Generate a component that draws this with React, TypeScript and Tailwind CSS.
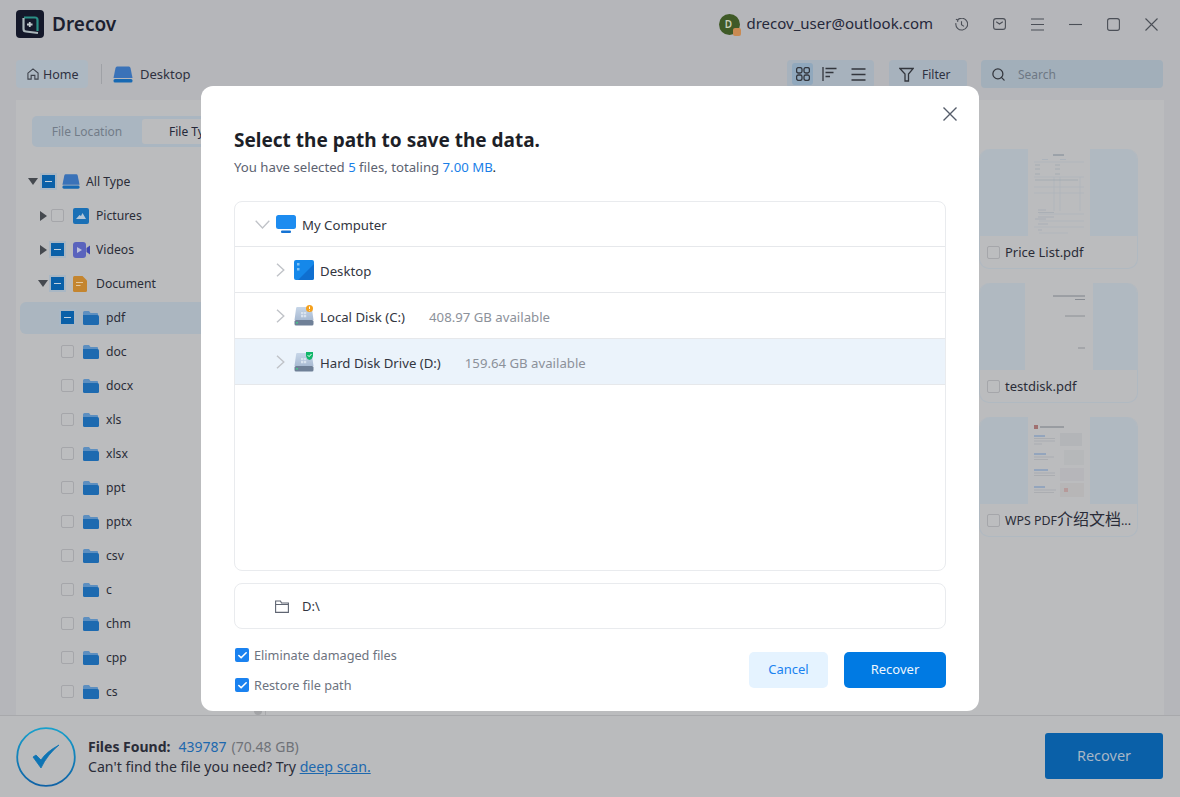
import React from "react";
import { Check, Search } from "lucide-react";

const FONT = "font-['Noto_Sans','Noto_Sans_CJK_SC',sans-serif]";

function Logo() {
  return (
    <svg width="28" height="28" viewBox="0 0 28 28">
      <rect width="28" height="28" rx="4" fill="#14182a" />
      <path d="M8 7.5 H19 Q21.5 7.5 21.5 10 V21" fill="none" stroke="#2a8f86" strokeWidth="2.2" />
      <path d="M7.5 8 V19 Q7.5 21.5 10 21.5 L22 23" fill="none" stroke="#aab6ba" strokeWidth="2.2" />
      <path d="M11 14.5 H16.5 M13.75 12 V17" stroke="#c4cbce" strokeWidth="1.8" />
    </svg>
  );
}

function DriveIcon({ w = 20 }: { w?: number }) {
  return (
    <svg width={w} height="17" viewBox="0 0 20 17">
      <path d="M4 0.5 H16 Q17 0.5 17.5 2 L19.5 12 H0.5 L2.5 2 Q3 0.5 4 0.5 Z" fill="#3a72b8" />
      <rect x="0.5" y="13" width="19" height="3.5" rx="1.5" fill="#1769b3" />
    </svg>
  );
}

function Tri({ open }: { open: boolean }) {
  return open ? (
    <svg width="10" height="7" viewBox="0 0 10 7"><path d="M0 0 H10 L5 7 Z" fill="#45494f" /></svg>
  ) : (
    <svg width="7" height="10" viewBox="0 0 7 10"><path d="M0 0 L7 5 L0 10 Z" fill="#45494f" /></svg>
  );
}

function TreeCheck({ on }: { on: boolean }) {
  return on ? (
    <span className="w-[13px] h-[13px] bg-[#0a60a8] flex items-center justify-center outline outline-2 outline-[#a9b7c4] shrink-0">
      <span className="w-[7px] h-[1px] bg-[#c4d2de]" />
    </span>
  ) : (
    <span className="w-[13px] h-[13px] rounded-[2px] border border-[#a5a6aa] bg-[#bcbdbf] shrink-0" />
  );
}

function FolderIcon() {
  return (
    <svg width="16" height="14" viewBox="0 0 16 14">
      <path d="M0 1.5 Q0 0 1.5 0 H6 L7.5 2 H14 Q15 2 15 3 V4 H0 Z" fill="#5d8fc0" />
      <path d="M0 4 H14.5 Q16 4 16 5.5 V12.5 Q16 14 14.5 14 H1.5 Q0 14 0 12.5 Z" fill="#1d6ab0" />
    </svg>
  );
}

function PicturesIcon() {
  return (
    <svg width="16" height="16" viewBox="0 0 16 16">
      <rect width="16" height="16" rx="2" fill="#1a70b6" />
      <path d="M3 11 L6.5 7 L8 8 L9.5 5 L13 11 Z" fill="#b3c6d8" />
    </svg>
  );
}

function VideoIcon() {
  return (
    <svg width="17" height="16" viewBox="0 0 17 16">
      <rect width="13" height="16" rx="3" fill="#5a63bd" />
      <path d="M4 5 L9 8 L4 11 Z" fill="#bcc0dc" />
      <path d="M13.5 6 L17 3.5 V12.5 L13.5 10 Z" fill="#3f48ae" />
    </svg>
  );
}

function DocIcon() {
  return (
    <svg width="14" height="16" viewBox="0 0 14 16">
      <path d="M1.5 0 H9.5 L14 4.5 V14.5 Q14 16 12.5 16 H1.5 Q0 16 0 14.5 V1.5 Q0 0 1.5 0 Z" fill="#c4852f" />
      <path d="M3 6.5 H10 M3 9.5 H7.5" stroke="#e3c9a2" strokeWidth="1.2" />
    </svg>
  );
}

type RowDef = { label: string; level: 0 | 1 | 2; on: boolean; tri?: "open" | "closed"; icon: React.ReactNode; sel?: boolean };

const rows: RowDef[] = [
  { label: "All Type", level: 0, on: true, tri: "open", icon: <DriveIcon w={18} /> },
  { label: "Pictures", level: 1, on: false, tri: "closed", icon: <PicturesIcon /> },
  { label: "Videos", level: 1, on: true, tri: "closed", icon: <VideoIcon /> },
  { label: "Document", level: 1, on: true, tri: "open", icon: <DocIcon /> },
  { label: "pdf", level: 2, on: true, icon: <FolderIcon />, sel: true },
  ...["doc", "docx", "xls", "xlsx", "ppt", "pptx", "csv", "c", "chm", "cpp", "cs"].map(
    (label): RowDef => ({ label, level: 2, on: false, icon: <FolderIcon /> })
  ),
];

function TreeRow({ r }: { r: RowDef }) {
  const pad = r.level === 0 ? "pl-[12px]" : r.level === 1 ? "pl-[24px]" : "pl-[45px]";
  const triW = r.level === 0 ? "w-[14px]" : r.level === 1 ? "w-[11px]" : "w-0";
  const iconW = r.level === 0 ? "w-[24px] ml-[7px]" : "w-[23px] ml-[9px]";
  return (
    <div className={`h-[34px] flex items-center ${pad} relative shrink-0`}>
      {r.sel && <div className="absolute left-[4px] right-0 top-[1px] bottom-[1px] bg-[#abb6c0] rounded-l-[6px]" />}
      <div className="relative flex items-center">
        <span className={`${triW} flex items-center justify-start shrink-0 ${r.level === 1 && r.tri === "open" ? "-translate-x-[2px]" : ""}`}>
          {r.tri && <Tri open={r.tri === "open"} />}
        </span>
        <TreeCheck on={r.on} />
        <span className={`${iconW} flex items-center shrink-0`}>{r.icon}</span>
        <span className="text-[12.2px] text-[#2a2c38]">{r.label}</span>
      </div>
    </div>
  );
}

function DocThumb({ kind }: { kind: "price" | "test" | "wps" }) {
  return (
    <div className="h-[88px] rounded-t-[10px] bg-[#b0b9c1] flex justify-center overflow-hidden">
      <div className={`${kind === "test" ? "w-[68px]" : "w-[62px]"} h-full bg-[#bbbcbe]`}>
        {kind === "price" && (
          <svg width="62" height="88" viewBox="0 0 62 88">
            <path d="M25 6 H36" stroke="#7c8894" strokeWidth="1" />
            <path d="M14 10.5 H20 M32 10.5 H38" stroke="#a3adb8" strokeWidth="0.6" />
            <path d="M6 13 H56 M6 28 H56 M6 38 H56 M6 44 H56 M11 65 H56 M11 72 H56 M6 78 H56 M11 84 H40" stroke="#aab1b8" strokeWidth="0.5" />
            <path d="M26 28 V62 M32 28 V62 M52 28 V62" stroke="#aab1b8" strokeWidth="0.5" />
            <path d="M7 16 H12 M27 16 H32 M7 20 H12 M27 20 H32 M7 25 H12 M27 25 H32 M7 31 H50" stroke="#99a3ad" strokeWidth="0.6" />
            <path d="M10 61 H18 M10 63.5 H26 M10 68 H26 M7 70 H18 M10 75 H20 M10 81 H14" stroke="#99a3ad" strokeWidth="0.5" />
          </svg>
        )}
        {kind === "test" && (
          <svg width="68" height="88" viewBox="0 0 68 88">
            <path d="M28 13 H60" stroke="#777c84" strokeWidth="0.9" />
            <path d="M50 16.5 H60" stroke="#7b8088" strokeWidth="0.8" />
            <path d="M40 33 H60" stroke="#80858c" strokeWidth="0.8" />
            <path d="M53 65 H60" stroke="#7b8088" strokeWidth="0.7" />
          </svg>
        )}
        {kind === "wps" && (
          <svg width="62" height="88" viewBox="0 0 62 88">
            <rect x="6" y="8" width="4" height="4" fill="#a07070" />
            <path d="M12 10 H36" stroke="#777c84" strokeWidth="1" />
            <path d="M6 19 H17 M6 37 H18 M6 53 H20 M6 70 H17" stroke="#6d8ebc" strokeWidth="1" />
            <path d="M6 21.5 H27 M6 24 H27 M6 27 H14 M6 40 H26 M6 42.5 H20 M6 56 H27 M6 58.5 H27 M6 73 H28 M6 75.5 H26" stroke="#9a9ea4" strokeWidth="0.5" />
            <rect x="32" y="16" width="22" height="13" fill="#b3b5b8" />
            <rect x="36" y="33" width="20" height="15" fill="#b6b8ba" />
            <rect x="32" y="51" width="24" height="13" fill="#b6b6ba" />
            <rect x="32" y="66" width="24" height="14" fill="#b7b6b7" />
            <rect x="36" y="71" width="4" height="4" fill="#b69a9a" />
          </svg>
        )}
      </div>
    </div>
  );
}

function FileCard({ kind, children }: { kind: "price" | "test" | "wps"; children: React.ReactNode }) {
  return (
    <div className="w-[159px] h-[120px] rounded-[10px] border border-[#b0b9c1] border-t-0 flex flex-col shrink-0">
      <DocThumb kind={kind} />
      <div className="flex items-center pl-[7px] h-[32px] gap-[5px] pt-[1px]">
        <span className="w-[13px] h-[13px] rounded-[2px] border border-[#a5a6aa] bg-[#bcbdbf] shrink-0" />
        <span className={`${kind === "wps" ? "text-[12.4px]" : "text-[13px]"} text-[#2a2c38] whitespace-nowrap`}>{children}</span>
      </div>
    </div>
  );
}

function HardDisk({ badge }: { badge: "warn" | "ok" }) {
  return (
    <svg width="20" height="21" viewBox="0 0 20 21">
      <defs>
        <linearGradient id={`hd-${badge}`} x1="0" y1="0" x2="0" y2="1">
          <stop offset="0" stopColor="#c7d6e8" />
          <stop offset="1" stopColor="#a8bad2" />
        </linearGradient>
      </defs>
      <path d="M3 2 H16 Q18 2 18 4 L19.5 15 H0.5 L2 4 Q2 2 3 2 Z" fill={`url(#hd-${badge})`} />
      <path d="M7 7 H9.3 V9.3 H7 Z M9.9 7 H12.2 V9.3 H9.9 Z M7 9.9 H9.3 V12.2 H7 Z M9.9 9.9 H12.2 V12.2 H9.9 Z" fill="#d9e3ef" />
      <rect x="0.5" y="15" width="19" height="5.5" rx="1.5" fill="#6f8097" />
      <rect x="2" y="17" width="2" height="1.5" fill="#47c48a" />
      {badge === "warn" ? (
        <>
          <circle cx="15.5" cy="3.5" r="3.5" fill="#f5a11d" />
          <path d="M15.5 1.5 V4 M15.5 5 V5.6" stroke="#fff" strokeWidth="1" />
        </>
      ) : (
        <>
          <path d="M12 1 H19 V5 Q18.5 8 15.5 9 Q12.5 8 12 5 Z" fill="#12b76a" />
          <path d="M13.7 4.2 L15.1 5.6 L17.5 3" fill="none" stroke="#fff" strokeWidth="1" />
        </>
      )}
    </svg>
  );
}

function RowChevron() {
  return (
    <svg width="9" height="14" viewBox="0 0 9 14" fill="none" stroke="#c0c3c8" strokeWidth="1.4" className="mr-[9px] shrink-0">
      <path d="M1 0.7 L7.8 7 L1 13.3" />
    </svg>
  );
}

function DialogRow({ icon, label, extra, sel }: { icon: React.ReactNode; label: string; extra?: string; sel?: boolean }) {
  return (
    <div className={`h-[46px] flex items-center pl-[41px] border-b border-[#e6e8eb] ${sel ? "bg-[#ebf3fb]" : ""}`}>
      <RowChevron />
      <span className="w-[26px] flex items-center">{icon}</span>
      <span className="text-[13.2px] text-[#33363f] pt-[4px]">{label}</span>
      {extra && <span className="text-[13.2px] text-[#8c919a] ml-[24px] pt-[4px]">{extra}</span>}
    </div>
  );
}

function BlueCheck({ label }: { label: string }) {
  return (
    <div className="flex items-center gap-[5px] pl-[1px]">
      <span className="w-[14px] h-[14px] rounded-[2px] bg-[#1a82f0] flex items-center justify-center">
        <Check size={11} strokeWidth={3.5} className="text-white" />
      </span>
      <span className="text-[12.7px] leading-[20px] text-[#6d7380]">{label}</span>
    </div>
  );
}

const ICON = "#4b4f57";

export default function App() {
  return (
    <div className={`${FONT} relative w-[1180px] h-[797px] overflow-hidden bg-[#b5b6ba] flex flex-col`}>
      {/* title bar */}
      <header className="h-[48px] shrink-0 flex items-center pl-[16px] pr-[22px]">
        <Logo />
        <span className="ml-[8px] text-[19px] font-semibold text-[#1c1f30]">Drecov</span>
        <div className="ml-auto flex items-center">
          <span className="relative w-[21px] h-[21px] rounded-full bg-[#3f5a27] flex items-center justify-center text-[10px] font-semibold text-[#c9d0bb] pr-[3px]">
            D
            <span className="absolute right-[-1px] bottom-[-1px] w-[8px] h-[8px] rounded-[2px] bg-[#c98a52]" />
          </span>
          <span className="ml-[6px] text-[15px] text-[#25283a] -mt-[2px]">drecov_user@outlook.com</span>
          <svg className="ml-[22px]" width="13" height="13" viewBox="0 0 13 13" fill="none" stroke={ICON} strokeWidth="1.1">
            <path d="M2.6 1.9 A5.9 5.9 0 1 1 0.9 5.2" />
            <path d="M0.9 1.2 L2.8 2 L2.6 3.9" />
            <path d="M6.5 3.2 V6.8 L9 8.4" />
          </svg>
          <svg className="ml-[25px]" width="13" height="12" viewBox="0 0 13 12" fill="none" stroke={ICON} strokeWidth="1.1">
            <rect x="0.6" y="0.6" width="11.8" height="10.8" rx="2.5" />
            <path d="M3.2 3.8 L6.5 6 L9.8 3.8" />
          </svg>
          <svg className="ml-[25px]" width="13" height="13" viewBox="0 0 13 13" fill="none" stroke={ICON} strokeWidth="1.1">
            <path d="M0 1 H13 M0 6.5 H13 M0 12 H13" />
          </svg>
          <svg className="ml-[25px]" width="13" height="13" viewBox="0 0 13 13" fill="none" stroke={ICON} strokeWidth="1.1">
            <path d="M0 6.5 H13" />
          </svg>
          <svg className="ml-[25px]" width="13" height="13" viewBox="0 0 13 13" fill="none" stroke={ICON} strokeWidth="1.1">
            <rect x="0.6" y="0.6" width="11.8" height="11.8" rx="2.2" />
          </svg>
          <svg className="ml-[25px]" width="13" height="13" viewBox="0 0 13 13" fill="none" stroke={ICON} strokeWidth="1.1">
            <path d="M0.5 0.5 L12.5 12.5 M12.5 0.5 L0.5 12.5" />
          </svg>
        </div>
      </header>

      {/* toolbar */}
      <div className="h-[28px] mt-[12px] shrink-0 flex items-center pl-[16px] pr-[17px]">
        <button className="w-[72px] h-[28px] rounded-[4px] bg-[#adb8c2] flex items-center pl-[11px] gap-[4px] text-[12.5px] text-[#2e3140]">
          <svg width="12" height="12" viewBox="0 0 13 13" fill="none" stroke="#3f434c" strokeWidth="1.2">
            <path d="M1 5.5 L6.5 1 L12 5.5 V12 H8.5 V8 H4.5 V12 H1 Z" />
          </svg>
          <span className="pt-[2px]">Home</span>
        </button>
        <span className="ml-[13px] w-px h-[20px] bg-[#9fa1a6]" />
        <span className="ml-[11px]"><DriveIcon /></span>
        <span className="ml-[7px] text-[13px] text-[#2e3140] pt-[2px]">Desktop</span>
        <div className="ml-auto flex items-center">
          <div className="w-[87px] h-[28px] rounded-[4px] bg-[#a7b2bd] flex items-center pl-[5px]">
            <span className="w-[21px] h-[22px] rounded-[3px] bg-[#90a8bd] flex items-center justify-center">
              <svg width="14" height="14" viewBox="0 0 14 14" fill="none" stroke="#33363d" strokeWidth="1.3">
                <rect x="0.6" y="0.6" width="5.4" height="5.4" rx="1.8" />
                <rect x="8" y="0.6" width="5.4" height="5.4" rx="1.8" />
                <rect x="0.6" y="8" width="5.4" height="5.4" rx="1.8" />
                <rect x="8" y="8" width="5.4" height="5.4" rx="1.8" />
              </svg>
            </span>
            <svg className="ml-[9px]" width="15" height="14" viewBox="0 0 15 14" fill="none" stroke="#33363d" strokeWidth="1.3">
              <path d="M1 0 V14 M3.5 1.5 H14.5 M3.5 5.5 H11.5 M3.5 9.5 H8" />
            </svg>
            <svg className="ml-[14px]" width="15" height="13" viewBox="0 0 15 13" fill="none" stroke="#33363d" strokeWidth="1.3">
              <path d="M0.5 1 H14.5 M0.5 6.5 H14.5 M0.5 12 H14.5" />
            </svg>
          </div>
          <div className="ml-[15px] w-[78px] h-[28px] rounded-[4px] bg-[#a7b2bd] flex items-center pl-[10px] gap-[8px] text-[12px] text-[#2e3140] pt-[1px]">
            <svg width="15" height="15" viewBox="0 0 15 15" fill="none" stroke="#33363d" strokeWidth="1.3">
              <path d="M0.8 1.5 H14.2 L9.5 7 V14 H6 V7 Z" />
            </svg>
            Filter
          </div>
          <div className="ml-[14px] w-[182px] h-[28px] rounded-[4px] bg-[#a2afba] flex items-center pl-[10px] gap-[12px] text-[12px] text-[#6e7884] pt-[1px]">
            <Search size={15} strokeWidth={2} className="text-[#33363d]" />
            Search
          </div>
        </div>
      </div>

      {/* main panel */}
      <main className="mt-[12px] mx-[16px] h-[615px] shrink-0 bg-[#bbbcbe] flex overflow-hidden">
        <aside className="relative w-[250px] shrink-0 flex flex-col pt-[16px] border-r border-[#a8a9ac]">
          <div className="ml-[16px] w-[220px] h-[31px] rounded-[5px] bg-[#aab6c1] flex items-center pl-[3px] text-[12px] shrink-0">
            <span className="w-[104px] text-center text-[#727c88] pt-[1px]">File Location</span>
            <span className="ml-[3px] w-[100px] h-[25px] rounded-[3px] bg-[#bbbcbe] flex items-center pl-[27px] pt-[1px] text-[#25283a]">File Type</span>
          </div>
          <div className="mt-[18px] flex flex-col">
            {rows.map((r) => (
              <TreeRow key={r.label} r={r} />
            ))}
          </div>
          <div className="absolute right-[3px] bottom-0 w-[8px] h-[120px] rounded-full bg-[#a3a4a7]" />
        </aside>
        <section className="flex-1 flex flex-col items-end pr-[26px] pt-[49px] gap-[14px]">
          <FileCard kind="price">Price List.pdf</FileCard>
          <FileCard kind="test">testdisk.pdf</FileCard>
          <FileCard kind="wps">WPS PDF<span className="text-[16px] leading-[16px]">介绍文档</span>...</FileCard>
        </section>
      </main>

      {/* footer */}
      <footer className="flex-1 border-t border-[#a8a9ac] bg-[#babbbd] flex items-center pl-[16px] pr-[17px]">
        <svg width="60" height="60" viewBox="0 0 60 60" fill="none">
          <defs>
            <linearGradient id="ring" x1="0" y1="0" x2="0" y2="1">
              <stop offset="0" stopColor="#18a0cc" />
              <stop offset="1" stopColor="#0f62a6" />
            </linearGradient>
          </defs>
          <circle cx="30" cy="30" r="28.8" stroke="url(#ring)" strokeWidth="1.8" />
          <path d="M17 30 L25 41 Q31 28 43 18 Q30 25 25 33 L20 28 Z" fill="#0e74b4" stroke="#0e74b4" strokeWidth="0.8" strokeLinejoin="round" />
        </svg>
        <div className="ml-[12px] flex flex-col text-[14px] leading-[20px] text-[#2a2c38]">
          <div>
            <span className="font-bold">Files Found:</span>
            <span className="ml-[8px] text-[#1d68ae]">439787</span>
            <span className="ml-[5px] text-[#6f7278]">(70.48 GB)</span>
          </div>
          <div className="text-[14.15px]">
            Can't find the file you need? Try <span className="text-[#1d68ae] underline">deep scan.</span>
          </div>
        </div>
        <button className="ml-auto -mt-[2px] w-[118px] h-[46px] rounded-[3px] bg-[#0a60a8] text-[14.5px] text-[#a7b6c6]">Recover</button>
      </footer>

      {/* dialog */}
      <div className="absolute left-[201px] top-[86px] w-[778px] h-[625px] bg-white rounded-[12px] px-[33px] flex flex-col">
        <button className="absolute right-[22px] top-[21px]">
          <svg width="14" height="14" viewBox="0 0 14 14" fill="none" stroke="#555c6a" strokeWidth="1.4">
            <path d="M0.5 0.5 L13.5 13.5 M13.5 0.5 L0.5 13.5" />
          </svg>
        </button>
        <h1 className="mt-[40px] text-[19px] leading-[28px] font-bold text-[#1d1f28]">Select the path to save the data.</h1>
        <p className="mt-[3px] text-[13.2px] leading-[20px] text-[#5c6270]">
          You have selected <span className="text-[#1a7fe8]">5</span> files, totaling <span className="text-[#1a7fe8]">7.00 MB</span><span className="text-[#1d1f28]">.</span>
        </p>
        <div className="mt-[24px] h-[370px] shrink-0 rounded-[8px] border border-[#e9ebee] flex flex-col overflow-hidden">
          <div className="h-[45px] flex items-center pl-[20px] border-b border-[#e6e8eb]">
            <svg className="mr-[6px]" width="15" height="9" viewBox="0 0 15 9" fill="none" stroke="#c0c3c8" strokeWidth="1.3">
              <path d="M0.7 0.7 L7.5 8 L14.3 0.7" />
            </svg>
            <svg className="mr-[6px]" width="20" height="18" viewBox="0 0 20 18">
              <rect width="20" height="14" rx="2.5" fill="#1d8cf0" />
              <rect x="5" y="15.5" width="10" height="2.5" rx="1" fill="#1573d4" />
            </svg>
            <span className="text-[13.2px] text-[#33363f] pt-[3px]">My Computer</span>
          </div>
          <DialogRow
            label="Desktop"
            icon={
              <svg width="20" height="20" viewBox="0 0 20 20">
                <rect width="20" height="20" rx="2" fill="#1588ea" />
                <path d="M20 4 V18 Q20 20 18 20 H4 Z" fill="#0f6fd0" />
                <rect x="3" y="3" width="2.5" height="2.5" fill="#7fc2f5" />
                <rect x="3" y="8" width="2.5" height="2.5" fill="#7fc2f5" />
              </svg>
            }
          />
          <DialogRow label="Local Disk (C:)" extra="408.97 GB available" icon={<HardDisk badge="warn" />} />
          <DialogRow label="Hard Disk Drive (D:)" extra="159.64 GB available" sel icon={<HardDisk badge="ok" />} />
        </div>
        <div className="mt-[12px] h-[46px] shrink-0 rounded-[8px] border border-[#e9ebee] flex items-center pl-[40px]">
          <svg width="14" height="13" viewBox="0 0 14 13" fill="none" stroke="#5f6572" strokeWidth="1.1">
            <path d="M0.6 1 H5.5 L6.5 3 H13.4 V12.4 H0.6 Z M0.6 4.5 H13.4" />
          </svg>
          <span className="ml-[13px] text-[13px] text-[#33363f] pt-[2px]">D:\</span>
        </div>
        <div className="flex-1 flex items-center justify-between">
          <div className="flex flex-col gap-[10px]">
            <BlueCheck label="Eliminate damaged files" />
            <BlueCheck label="Restore file path" />
          </div>
          <div className="flex items-center gap-[16px]">
            <button className="w-[79px] h-[36px] rounded-[5px] bg-[#e5f3ff] text-[13px] text-[#1a82f0]">Cancel</button>
            <button className="w-[102px] h-[36px] rounded-[5px] bg-[#007ae3] text-[13px] text-[#eef6fd]">Recover</button>
          </div>
        </div>
      </div>
    </div>
  );
}
